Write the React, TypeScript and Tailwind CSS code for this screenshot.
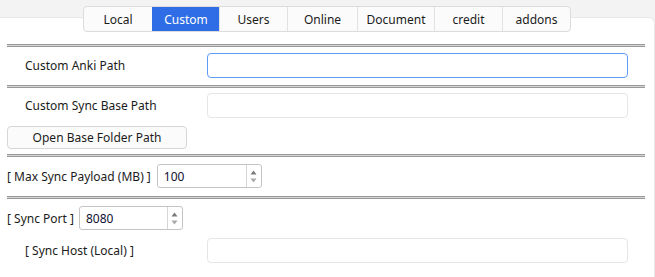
import React from "react";

const tabs = [
  { label: "Local", w: 68 },
  { label: "Custom", w: 67, active: true },
  { label: "Users", w: 68 },
  { label: "Online", w: 70 },
  { label: "Document", w: 77 },
  { label: "credit", w: 68 },
  { label: "addons", w: 68 },
];

function Sep() {
  return <div className="h-[3px] w-[638px] ml-[7px] border-y border-[#9a9a9a] bg-[#d4d4d4]" />;
}

function TextInput({ focused }: { focused?: boolean }) {
  return (
    <div
      className={
        "w-[421px] h-[25px] rounded-[4px] bg-white " +
        (focused ? "border border-[#5c9cf8]" : "border border-[#e6e6e6]")
      }
    />
  );
}

function SpinBox({ value, width }: { value: string; width: number }) {
  return (
    <div
      className="h-[24px] flex rounded-[3px] border border-[#c4c4c4] bg-white"
      style={{ width }}
    >
      <div className="flex-1 flex items-center pl-[6px] pt-[1px] text-[12px] text-[#101030]">{value}</div>
      <div className="w-[15px] border-l border-[#d6d6d6] flex flex-col items-center justify-center gap-[3px]">
        <svg width="7" height="5" viewBox="0 0 7 5">
          <path d="M3.5 0.5 L6.5 4.5 L0.5 4.5 Z" fill="#7a7a7a" />
        </svg>
        <svg width="7" height="5" viewBox="0 0 7 5">
          <path d="M0.5 0.5 L6.5 0.5 L3.5 4.5 Z" fill="#a8a8a8" />
        </svg>
      </div>
    </div>
  );
}

export default function App() {
  return (
    <div
      className="w-[655px] h-[277px] bg-[#f3f3f3] overflow-hidden text-[#1b1b1b]"
      style={{ fontFamily: '"Segoe UI", "Noto Sans", "Open Sans", sans-serif' }}
    >
      <div className="relative z-10 pt-[6px] pl-[83px]">
        <div className="flex h-[26px] w-fit rounded-[4px] border border-[#dcdcdc] bg-[#fbfbfb] overflow-hidden">
          {tabs.map((t, i) => (
            <div
              key={t.label}
              style={{ width: t.w }}
              className={
                "flex items-center justify-center pt-[1px] text-[12px] " +
                (i > 0 ? "border-l border-[#e2e2e2] " : "") +
                (t.active ? "bg-[#2f6de6] text-white border-l-[#2f6de6]" : "text-[#1b1b1b]")
              }
            >
              {t.label}
            </div>
          ))}
        </div>
      </div>
      <div className="-mt-[15px] h-[300px] bg-white rounded-tr-[6px] border-t border-r border-[#e8e8e8] pt-[26px]">
        <Sep />
        <div className="flex items-center h-[25px] mt-[6px]">
          <div className="w-[207px] pl-[25px] pt-[1px] text-[12px]">Custom Anki Path</div>
          <TextInput focused />
        </div>
        <div className="mt-[7px]">
          <Sep />
        </div>
        <div className="flex items-center h-[25px] mt-[5px]">
          <div className="w-[207px] pl-[25px] pt-[1px] text-[12px]">Custom Sync Base Path</div>
          <TextInput />
        </div>
        <div className="mt-[8px] ml-[7px] w-[180px] h-[23px] rounded-[4px] border border-[#d6d6d6] bg-[#fbfbfb] flex items-center justify-center pt-[1px] text-[12px]">
          Open Base Folder Path
        </div>
        <div className="mt-[5px]">
          <Sep />
        </div>
        <div className="flex items-center h-[24px] mt-[7px] pl-[7px] gap-[6px]">
          <div className="text-[12px] pt-[1px]">[ Max Sync Payload (MB) ]</div>
          <SpinBox value="100" width={105} />
        </div>
        <div className="mt-[8px]">
          <Sep />
        </div>
        <div className="flex items-center h-[24px] mt-[7px] pl-[7px] gap-[5px]">
          <div className="text-[12px] pt-[1px]">[ Sync Port ]</div>
          <SpinBox value="8080" width={104} />
        </div>
        <div className="flex items-center h-[25px] mt-[8px]">
          <div className="w-[207px] pl-[25px] pt-[1px] text-[12px]">[ Sync Host (Local) ]</div>
          <TextInput />
        </div>
      </div>
    </div>
  );
}
